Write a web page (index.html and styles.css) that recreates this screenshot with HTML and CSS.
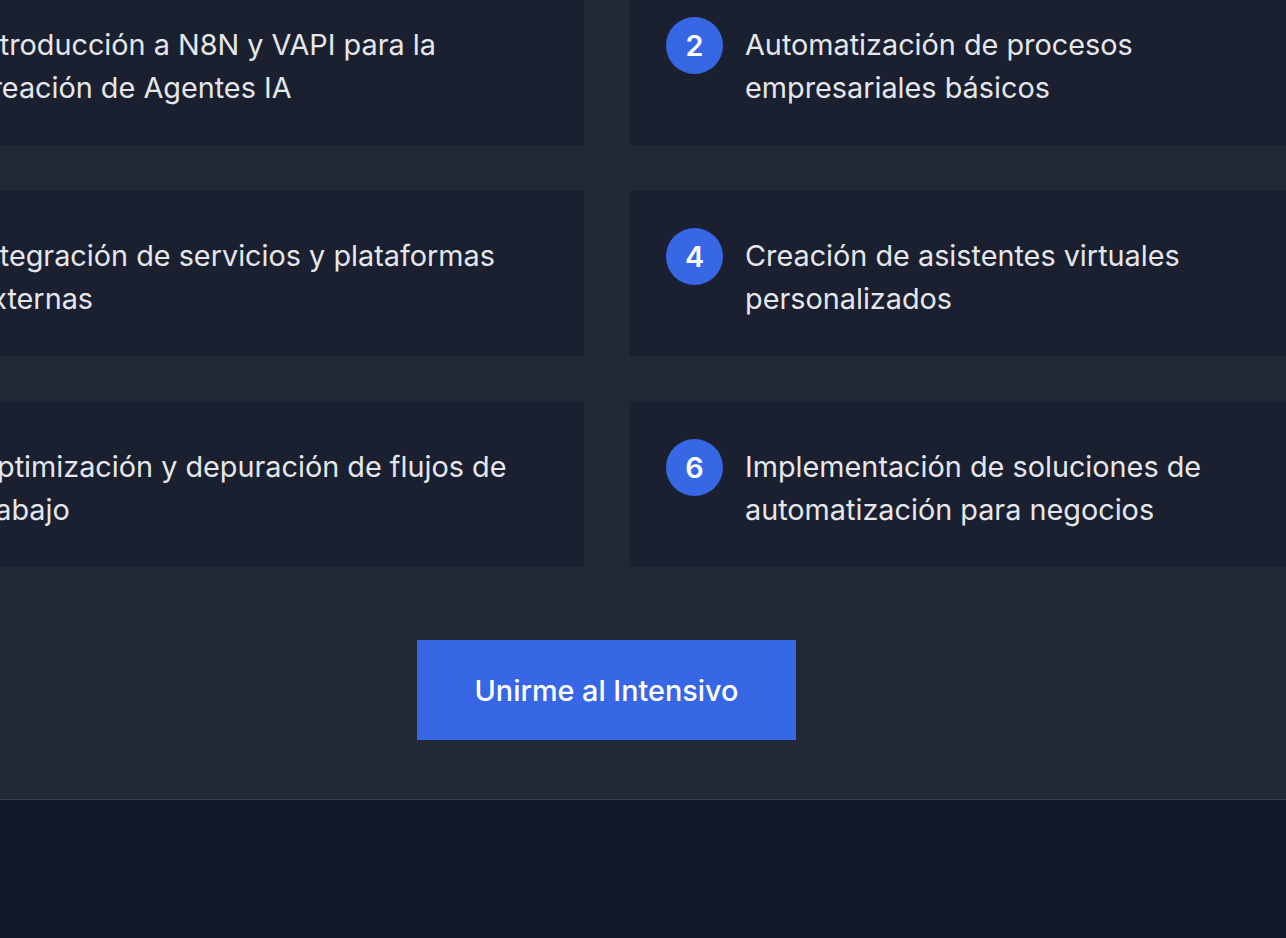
FILE: index.html
```html
<!DOCTYPE html>
<html lang="es">
<head>
<meta charset="utf-8">
<title>Intensivo</title>
<link rel="stylesheet" href="styles.css">
</head>
<body>
<section class="modules">
  <div class="grid">
    <div class="card"><span class="num">1</span><p class="text">Introducción a N8N y VAPI para la creación de Agentes IA</p></div>
    <div class="card"><span class="num">2</span><p class="text">Automatización de procesos empresariales básicos</p></div>
    <div class="card"><span class="num">3</span><p class="text">Integración de servicios y plataformas externas</p></div>
    <div class="card"><span class="num">4</span><p class="text">Creación de asistentes virtuales personalizados</p></div>
    <div class="card"><span class="num">5</span><p class="text">Optimización y depuración de flujos de trabajo</p></div>
    <div class="card"><span class="num">6</span><p class="text">Implementación de soluciones de automatización para negocios</p></div>
  </div>
  <div class="cta-row">
    <a class="cta" href="#">Unirme al Intensivo</a>
  </div>
</section>
<footer class="footer"></footer>
</body>
</html>
```

FILE: styles.css
```css
html, body {
  margin: 0;
  padding: 0;
}
body {
  background: #111827;
  font-family: Inter, "Noto Sans", sans-serif;
  overflow: hidden;
  width: 1286px;
  height: 938px;
}
.modules {
  background: #222836;
  border-bottom: 1px solid #394150;
  height: 800px;
  box-sizing: border-box;
  overflow: hidden;
}
.grid {
  display: grid;
  grid-template-columns: 724px 727px;
  column-gap: 46px;
  row-gap: 46px;
  width: 1497px;
  margin-left: -140px;
  margin-top: -20px;
}
.card {
  background: #1b2030;
  display: flex;
  align-items: flex-start;
  gap: 22px;
  padding: 37px 36px 35px;
  height: 165px;
  box-sizing: border-box;
}
.num {
  flex: none;
  width: 57px;
  height: 57px;
  border-radius: 50%;
  background: #3867e5;
  color: #ffffff;
  font-weight: 600;
  font-size: 28.8px;
  display: flex;
  align-items: center;
  justify-content: center;
}
.text {
  margin: 0;
  padding-top: 6px;
  color: #e5e7eb;
  font-size: 28.8px;
  line-height: 43.2px;
  font-weight: 400;
}
.cta-row {
  display: flex;
  justify-content: center;
  padding-top: 73px;
  padding-right: 73px;
}
.cta {
  display: flex;
  align-items: center;
  justify-content: center;
  width: 379px;
  height: 100px;
  background: #3867e5;
  color: #ffffff;
  font-size: 28.8px;
  font-weight: 500;
  text-decoration: none;
}
.footer {
  height: 138px;
  background: #111827;
}
```
